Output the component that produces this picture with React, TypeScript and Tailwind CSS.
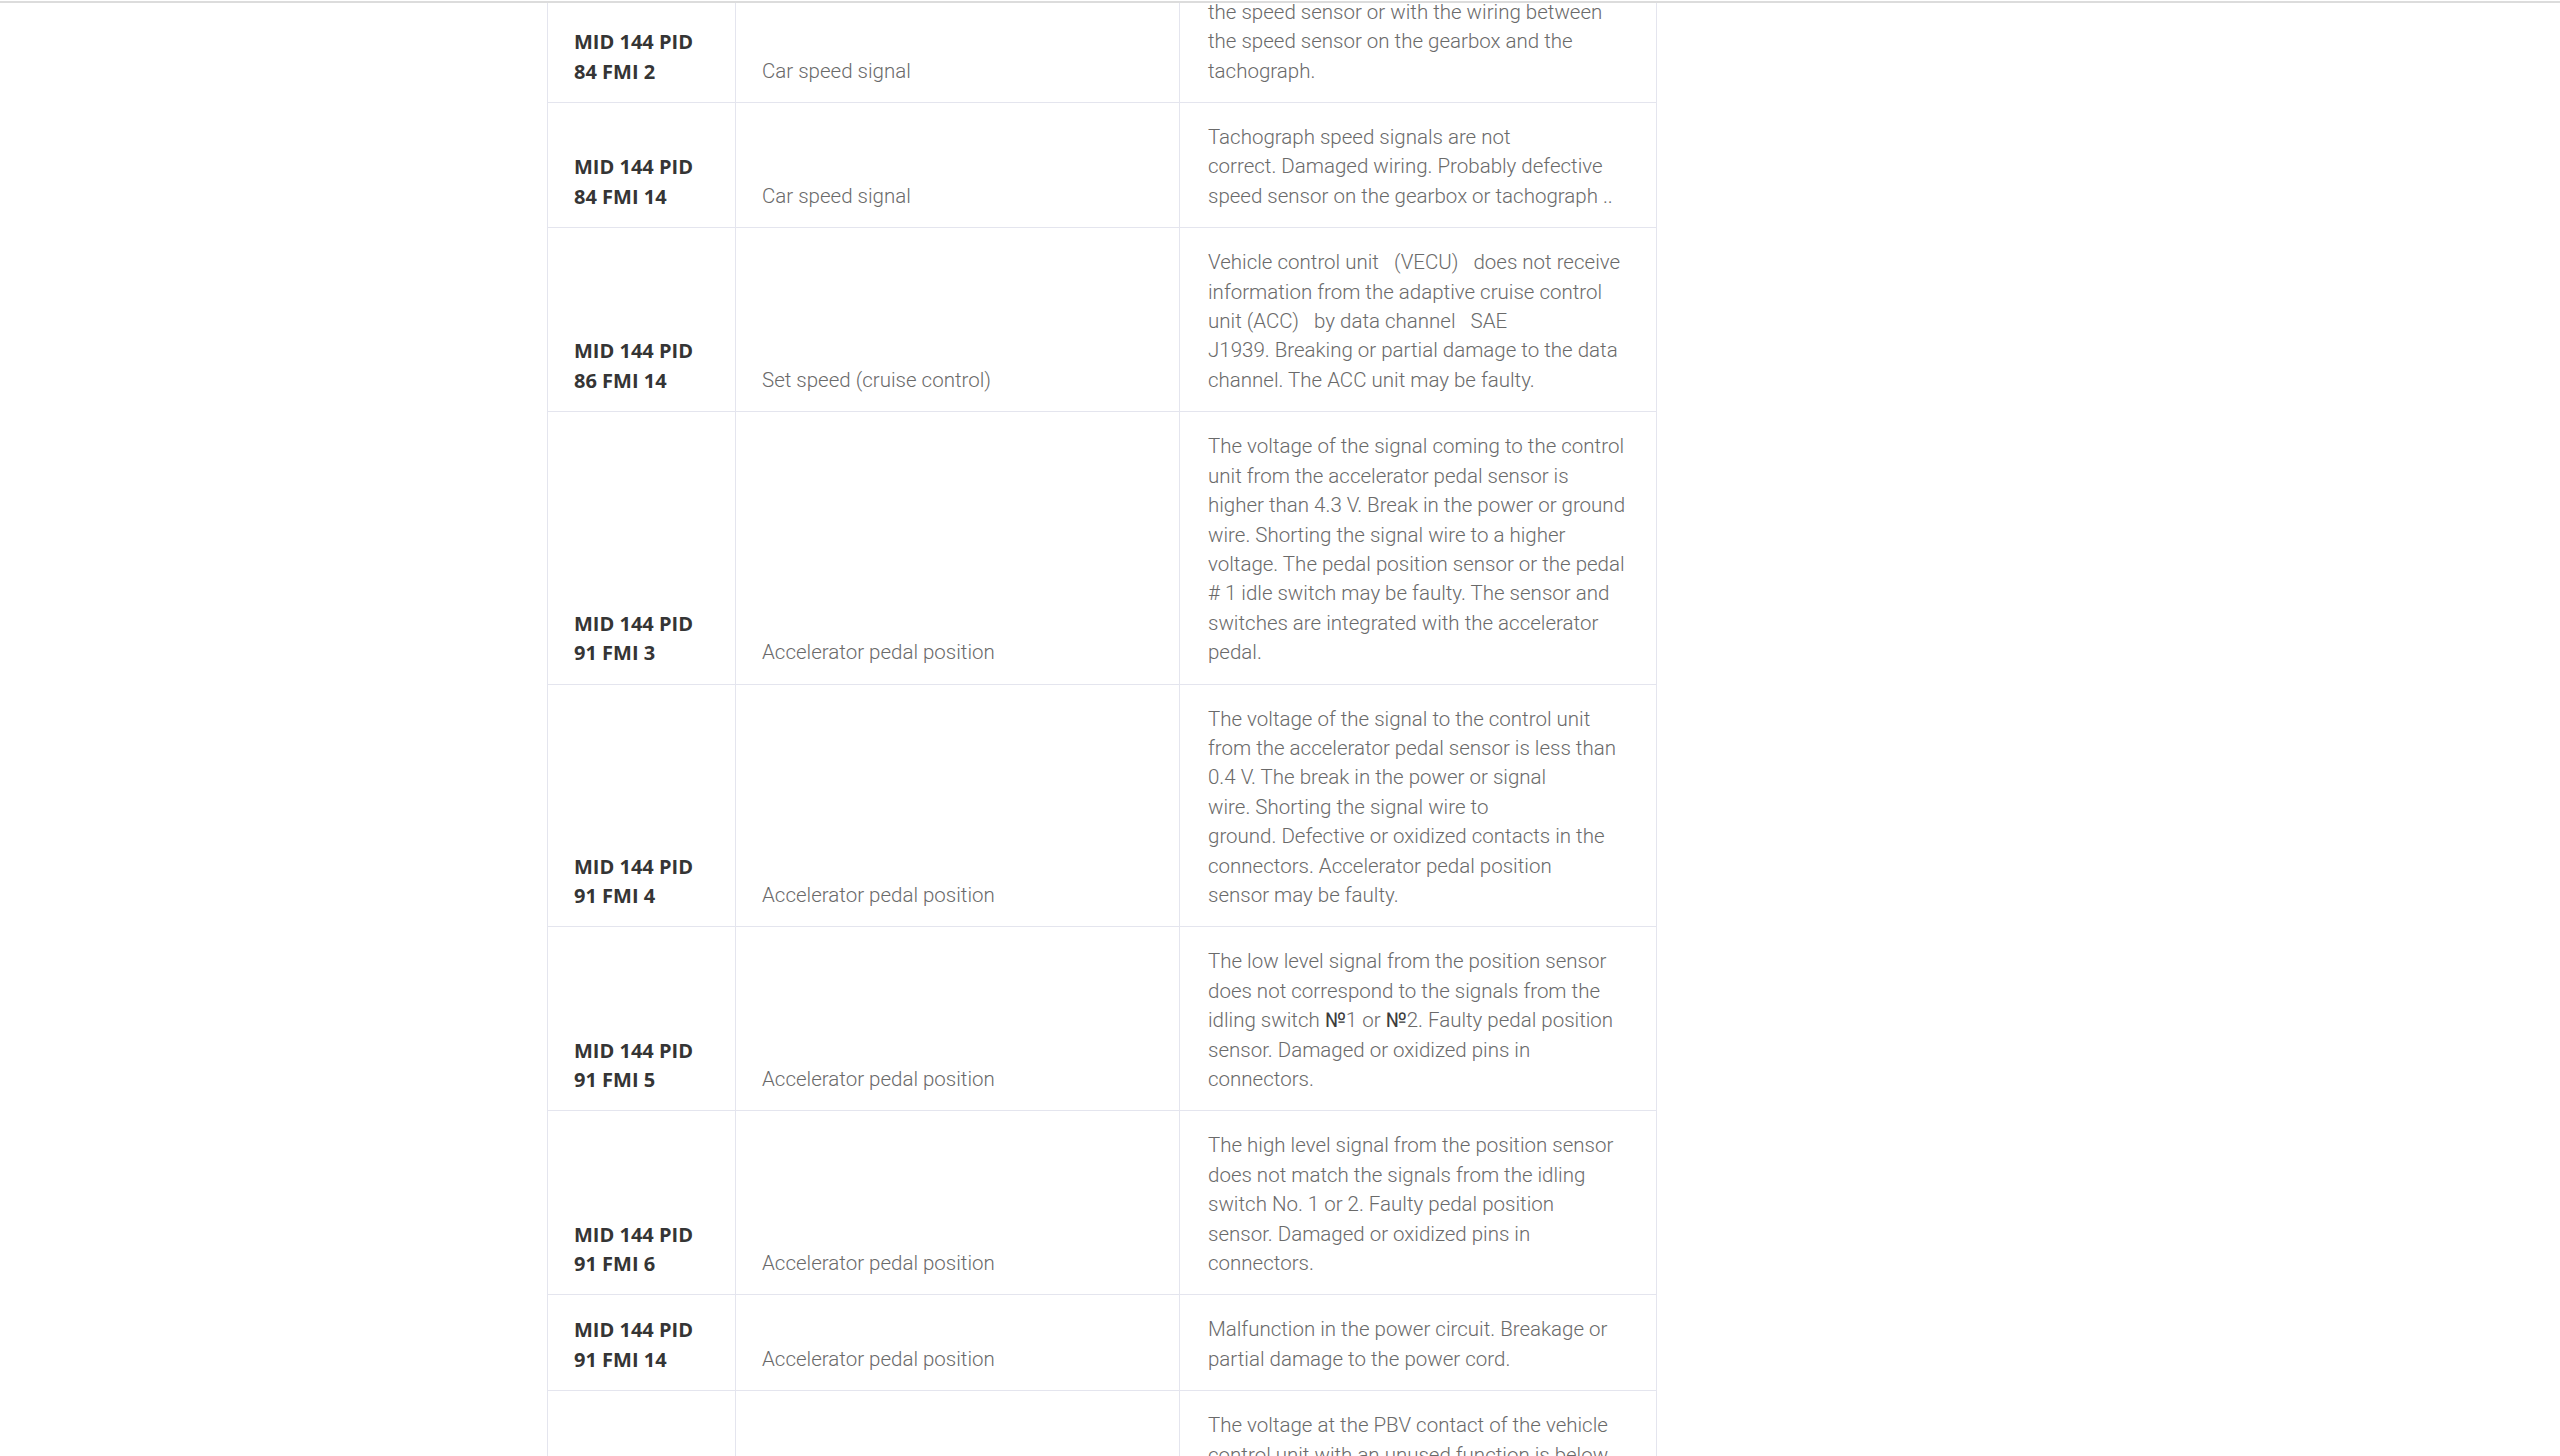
import React from 'react';

interface FaultRow {
  code: string[]
  name: string
  lines: React.ReactNode[]
}

const No = () => <span className="font-normal text-[#3c3c3c]">№</span>

const rows: FaultRow[] = [
  {
    code: ['MID 144 PID', '84 FMI 2'],
    name: 'Car speed signal',
    lines: [
      'There is no speed signal from the tachograph.',
      'Possibly a short circuit or a break in',
      'the speed sensor or with the wiring between',
      'the speed sensor on the gearbox and the',
      'tachograph.',
    ],
  },
  {
    code: ['MID 144 PID', '84 FMI 14'],
    name: 'Car speed signal',
    lines: [
      'Tachograph speed signals are not',
      'correct. Damaged wiring. Probably defective',
      'speed sensor on the gearbox or tachograph ..',
    ],
  },
  {
    code: ['MID 144 PID', '86 FMI 14'],
    name: 'Set speed (cruise control)',
    lines: [
      'Vehicle control unit \u00a0 (VECU) \u00a0 does not receive',
      'information from the adaptive cruise control',
      'unit (ACC) \u00a0 by data channel \u00a0 SAE',
      'J1939. Breaking or partial damage to the data',
      'channel. The ACC unit may be faulty.',
    ],
  },
  {
    code: ['MID 144 PID', '91 FMI 3'],
    name: 'Accelerator pedal position',
    lines: [
      'The voltage of the signal coming to the control',
      'unit from the accelerator pedal sensor is',
      'higher than 4.3 V. Break in the power or ground',
      'wire. Shorting the signal wire to a higher',
      'voltage. The pedal position sensor or the pedal',
      '# 1 idle switch may be faulty. The sensor and',
      'switches are integrated with the accelerator',
      'pedal.',
    ],
  },
  {
    code: ['MID 144 PID', '91 FMI 4'],
    name: 'Accelerator pedal position',
    lines: [
      'The voltage of the signal to the control unit',
      'from the accelerator pedal sensor is less than',
      '0.4 V. The break in the power or signal',
      'wire. Shorting the signal wire to',
      'ground. Defective or oxidized contacts in the',
      'connectors. Accelerator pedal position',
      'sensor may be faulty.',
    ],
  },
  {
    code: ['MID 144 PID', '91 FMI 5'],
    name: 'Accelerator pedal position',
    lines: [
      'The low level signal from the position sensor',
      'does not correspond to the signals from the',
      <>idling switch <No />1 or <No />2. Faulty pedal position</>,
      'sensor. Damaged or oxidized pins in',
      'connectors.',
    ],
  },
  {
    code: ['MID 144 PID', '91 FMI 6'],
    name: 'Accelerator pedal position',
    lines: [
      'The high level signal from the position sensor',
      'does not match the signals from the idling',
      'switch No. 1 or 2. Faulty pedal position',
      'sensor. Damaged or oxidized pins in',
      'connectors.',
    ],
  },
  {
    code: ['MID 144 PID', '91 FMI 14'],
    name: 'Accelerator pedal position',
    lines: [
      'Malfunction in the power circuit. Breakage or',
      'partial damage to the power cord.',
    ],
  },
  {
    code: ['MID 144 PID', '93 FMI 4'],
    name: 'PBV signal',
    lines: [
      'The voltage at the PBV contact of the vehicle',
      'control unit with an unused function is below',
      'the set value. Short circuit to ground in the',
      'wiring or in the connector.',
    ],
  },
]

export default function App() {
  return (
    <div className="relative h-[1456px] w-full overflow-hidden bg-white">
      <div className="absolute inset-x-0 top-0 z-10 h-[3px] border-b-2 border-[#dcdcdc] bg-white" />

      <div className="pl-[547px] -mt-[82px]">
        <table className="w-[1110px] table-fixed border-collapse font-['Roboto',sans-serif] text-[20.5px] leading-[29.4px]">
          <colgroup>
            <col className="w-[188px]" />
            <col className="w-[444px]" />
            <col />
          </colgroup>
          <tbody>
            {rows.map(row => (
              <tr key={row.code.join(' ')}>
                <td className="border border-[#e4e5ee] px-[26px] pt-[20px] pb-[16px] align-bottom font-['Open_Sans',sans-serif] text-[20px] font-bold text-[#353535]">
                  {row.code.map(part => (
                    <span className="block whitespace-nowrap" key={part}>{part}</span>
                  ))}
                </td>
                <td className="border border-[#e4e5ee] px-[26px] pt-[20px] pb-[16px] align-bottom font-light text-[#6a6a6a]">
                  {row.name}
                </td>
                <td className="border border-[#e4e5ee] pl-[28px] pr-[16px] pt-[20px] pb-[16px] align-bottom font-light text-[#6a6a6a]">
                  {row.lines.map((line, i) => (
                    <span className="block whitespace-nowrap" key={i}>{line}</span>
                  ))}
                </td>
              </tr>
            ))}
          </tbody>
        </table>
      </div>
    </div>
  )
}
